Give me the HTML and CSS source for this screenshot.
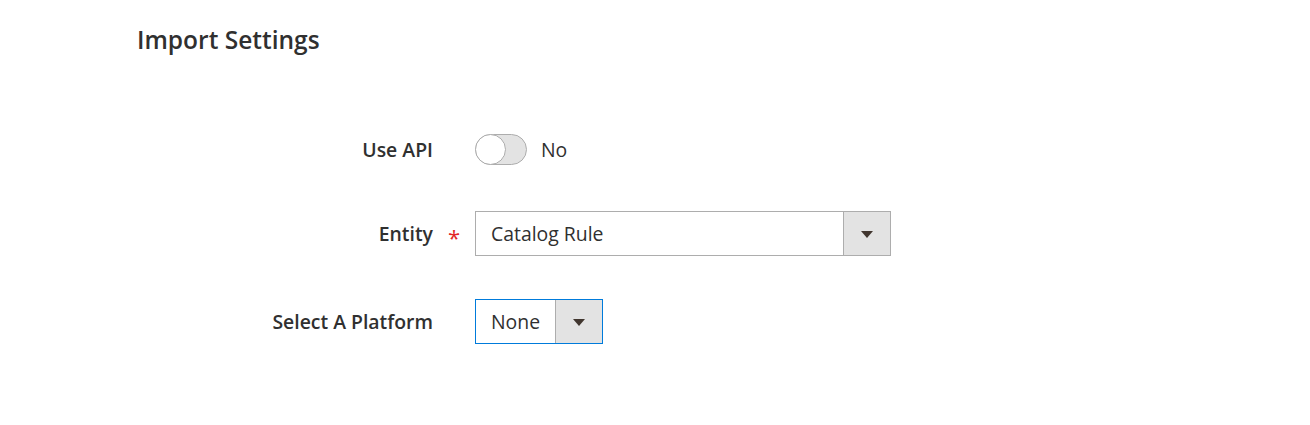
FILE: index.html
```html
<!DOCTYPE html>
<html>

<head>
  <title>Import Settings</title>
  <link rel="stylesheet" href="styles.css">
</head>

<body>
  <div class="page">
    <h2 class="legend">Import Settings</h2>
    <form class="fields">
      <div class="field field-switch">
        <label class="label" for="useApi">Use API</label>
        <span class="mark"></span>
        <div class="control">
          <input type="checkbox" id="useApi" class="switch-input">
          <label class="switch" for="useApi"><span class="knob"></span></label>
          <span class="switch-text">No</span>
        </div>
      </div>
      <div class="field">
        <label class="label" for="entity">Entity</label>
        <span class="mark required">*</span>
        <div class="control">
          <div class="select select-wide" id="entity">
            <span class="select-value">Catalog Rule</span>
            <span class="select-arrow"></span>
          </div>
        </div>
      </div>
      <div class="field">
        <label class="label" for="platform">Select A Platform</label>
        <span class="mark"></span>
        <div class="control">
          <div class="select select-small select-focus" id="platform">
            <span class="select-value">None</span>
            <span class="select-arrow"></span>
          </div>
        </div>
      </div>
    </form>
  </div>
</body>

</html>
```

FILE: styles.css
```css
body {
  margin: 0;
  background: #ffffff;
  color: #303030;
  font-family: "Open Sans", "Noto Sans", sans-serif;
}
.page {
  padding: 24px 0 0 137px;
}
.legend {
  margin: 0 0 75px;
  font-size: 24.5px;
  line-height: 32px;
  font-weight: 600;
  color: #303030;
}
.fields {
  margin-left: -137px;
}
.field {
  display: grid;
  grid-template-columns: 433px 42px auto;
  align-items: center;
  margin-bottom: 43px;
}
.field-switch {
  padding: 3px 0;
}
.label {
  text-align: right;
  font-size: 19.4px;
  font-weight: 600;
  color: #303030;
}
.mark {
  text-align: center;
}
.required {
  color: #e22626;
  font-size: 22px;
  line-height: 1;
  padding-top: 6px;
}
.control {
  display: flex;
  align-items: center;
  font-size: 19.4px;
}
.switch-input {
  display: none;
}
.switch {
  position: relative;
  box-sizing: border-box;
  width: 52px;
  height: 31px;
  border: 1px solid #adadad;
  border-radius: 16px;
  background: #e3e3e3;
  cursor: pointer;
}
.knob {
  position: absolute;
  left: -1px;
  top: -1px;
  box-sizing: border-box;
  width: 31px;
  height: 31px;
  border: 1px solid #adadad;
  border-radius: 50%;
  background: #ffffff;
}
.switch-text {
  margin-left: 14px;
}
.select {
  display: flex;
  box-sizing: border-box;
  height: 45px;
  border: 1px solid #adadad;
  background: #ffffff;
}
.select-wide {
  width: 416px;
}
.select-small {
  width: 128px;
}
.select-focus {
  border-color: #007bdb;
}
.select-value {
  flex: 1;
  display: flex;
  align-items: center;
  padding: 0 15px;
}
.select-arrow {
  position: relative;
  width: 46px;
  border-left: 1px solid #adadad;
  background: #e3e3e3;
}
.select-arrow::after {
  content: "";
  position: absolute;
  left: 50%;
  top: 50%;
  margin: -3px 0 0 -6px;
  border-style: solid;
  border-width: 7px 6px 0;
  border-color: #41362f transparent transparent;
}
```
